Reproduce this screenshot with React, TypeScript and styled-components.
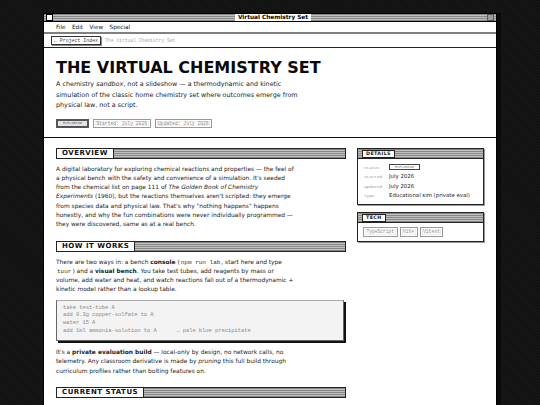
import React from "react";
import styled, { createGlobalStyle, css } from "styled-components";

const GlobalStyle = createGlobalStyle`
  html, body { margin: 0; padding: 0; }
  body {
    background: #141414;
    background-image: repeating-linear-gradient(45deg, #161616 0 1px, #121212 1px 2px);
    font-family: "DejaVu Sans", Verdana, sans-serif;
    color: #1a1a1a;
    overflow: hidden;
  }
`;

const stripes = css`
  background: repeating-linear-gradient(
    to bottom,
    #888888 0 1px,
    #c0c0c0 1px 2px
  );
`;

const Desktop = styled.div`
  height: 405px;
  padding: 13px 0 0 43px;
  box-sizing: border-box;
  overflow: hidden;
`;

const Window = styled.div`
  width: 454px;
  height: 400px;
  box-sizing: border-box;
  border: 1px solid #000;
  border-bottom: none;
  background: #fff;
  box-shadow: 4px 0 0 #0b0b0b;
  overflow: hidden;
`;

const TitleBar = styled.div`
  height: 7px;
  position: relative;
  ${stripes};
  border-bottom: 1px solid #000;
  display: flex;
  align-items: center;
  justify-content: center;
`;

const BoxButton = styled.span<{ $side: "left" | "right" }>`
  position: absolute;
  top: 0;
  ${(p) => (p.$side === "left" ? "left: 2px;" : "right: 2px;")}
  width: 5px;
  height: 5px;
  border: 1px solid ${(p) => (p.$side === "left" ? "#000" : "#555")};
  background: ${(p) => (p.$side === "left" ? "#fff" : "#9a9a9a")};
`;

const WindowTitle = styled.span`
  background: #fff;
  padding: 0 3px;
  font-weight: bold;
  font-size: 5.8px;
  line-height: 7px;
  color: #000;
  transform: translateX(3px);
`;

const MenuBar = styled.nav`
  height: 10px;
  display: flex;
  align-items: center;
  gap: 6.5px;
  padding: 0 12px;
  border-bottom: 2px solid #808080;
  font-size: 5.7px;
  color: #111;
`;

const MenuItem = styled.span``;

const Crumbs = styled.div`
  height: 13px;
  display: flex;
  align-items: center;
  gap: 4px;
  padding: 0 7px;
  border-bottom: 1px solid #222;
  font-family: "Liberation Mono", "DejaVu Sans Mono", monospace;
  font-size: 4.9px;
`;

const CrumbButton = styled.span`
  border: 1px solid #333;
  box-shadow: 1px 1px 0 #888;
  padding: 1px 2px;
  color: #444;
  line-height: 5px;
`;

const CrumbCurrent = styled.span`
  color: #aaa;
  font-size: 4.7px;
`;

const Hero = styled.header`
  padding: 11px 12px 9px;
  border-bottom: 1px solid #111;
`;

const Title = styled.h1`
  margin: 0;
  font-family: "DejaVu Sans", Verdana, sans-serif;
  font-weight: bold;
  font-size: 16px;
  line-height: 18px;
  color: #0a0a0a;
`;

const Lead = styled.p`
  margin: 2px 0 0;
  width: 250px;
  font-size: 6.4px;
  line-height: 10.5px;
  color: #222;
`;

const TagRow = styled.div`
  display: flex;
  gap: 4px;
  margin-top: 8px;
`;

const Tag = styled.span<{ $status?: boolean }>`
  font-family: "Liberation Mono", "DejaVu Sans Mono", monospace;
  font-size: 4.7px;
  line-height: 5px;
  padding: 1px 2.5px;
  ${(p) =>
    p.$status
      ? css`
          border: 2px solid #555;
          background: #e4e4e4;
          color: #666;
          font-size: 3.5px;
          padding: 0 5px;
          line-height: 4px;
        `
      : css`
          border: 1px solid #999;
          box-shadow: inset 0 0 0 1px #fff, inset 0 0 0 1.5px #ddd;
          color: #888;
        `}
`;

const Body = styled.main`
  display: grid;
  grid-template-columns: 290px 127px;
  gap: 11px;
  padding: 10px 12px 0;
  align-items: start;
`;

const Column = styled.div`
  display: flex;
  flex-direction: column;
`;

const Section = styled.section`
  margin-bottom: 11px;
`;

const SectionHead = styled.div`
  height: 11px;
  box-sizing: border-box;
  border: 1px solid #222;
  ${stripes};
  display: flex;
`;

const SectionLabel = styled.span`
  background: #fff;
  border-right: 1px solid #222;
  padding: 0 5px;
  font-weight: bold;
  font-size: 7px;
  letter-spacing: 0.5px;
  line-height: 9px;
  color: #111;
`;

const Para = styled.p`
  margin: 6px 0 0;
  width: 240px;
  font-size: 5.9px;
  line-height: 9.3px;
  color: #222;
`;

const Inline = styled.code`
  font-family: "Liberation Mono", "DejaVu Sans Mono", monospace;
  font-size: 6px;
  padding: 0 1px;
  color: #333;
`;

const CodeBlock = styled.pre`
  margin: 5px 2px 7px 0;
  padding: 4px 6px 5px;
  background: #f3f3f3;
  border: 1px solid #666;
  border-top-color: #aaa;
  box-shadow: 2px 2px 0 #111;
  font-family: "Liberation Mono", "DejaVu Sans Mono", monospace;
  font-size: 5.4px;
  line-height: 7.6px;
  color: #888;
  & + p { margin-top: 0; }
`;

const Panel = styled.aside`
  border: 1px solid #222;
  box-shadow: 1px 1px 0 #999;
  margin-bottom: 7px;
`;

const PanelHead = styled.div`
  height: 10px;
  box-sizing: border-box;
  border-bottom: 1px solid #222;
  ${stripes};
  display: flex;
  padding: 1px 0 0 4px;
`;

const PanelLabel = styled.span`
  background: #fff;
  border: 1px solid #222;
  padding: 0 3px;
  font-weight: bold;
  font-size: 4.8px;
  letter-spacing: 0.4px;
  line-height: 6px;
`;

const DetailGrid = styled.dl`
  margin: 0;
  padding: 4px 4px 3px 6px;
  display: grid;
  grid-template-columns: 25px 1fr;
  align-items: center;
`;

const DetailKey = styled.dt`
  font-family: "Liberation Mono", "DejaVu Sans Mono", monospace;
  font-size: 4.3px;
  line-height: 9.6px;
  color: #999;
`;

const DetailValue = styled.dd`
  margin: 0;
  font-size: 5.4px;
  line-height: 9.6px;
  color: #222;
`;

const StatusTag = styled.span`
  display: inline-block;
  border: 1.5px solid #444;
  padding: 0 5px;
  font-family: "Liberation Mono", monospace;
  font-size: 3.5px;
  line-height: 4px;
  color: #777;
  vertical-align: middle;
`;

const TechRow = styled.div`
  display: flex;
  gap: 2px;
  padding: 4px 5px;
`;

const TechTag = styled.span`
  border: 1px solid #999;
  box-shadow: inset 0 0 0 1px #fff, inset 0 0 0 1.5px #ddd;
  padding: 1.5px 2.5px;
  font-family: "Liberation Mono", monospace;
  font-size: 4.6px;
  line-height: 5px;
  color: #888;
`;

export default function App() {
  return (
    <>
      <GlobalStyle />
      <Desktop>
        <Window>
          <TitleBar>
            <BoxButton $side="left" />
            <WindowTitle>Virtual Chemistry Set</WindowTitle>
            <BoxButton $side="right" />
          </TitleBar>
          <MenuBar>
            <MenuItem>File</MenuItem>
            <MenuItem>Edit</MenuItem>
            <MenuItem>View</MenuItem>
            <MenuItem>Special</MenuItem>
          </MenuBar>
          <Crumbs>
            <CrumbButton>← Project Index</CrumbButton>
            <CrumbCurrent>The Virtual Chemistry Set</CrumbCurrent>
          </Crumbs>
          <Hero>
            <Title>THE VIRTUAL CHEMISTRY SET</Title>
            <Lead>
              A chemistry <em>sandbox</em>, not a slideshow — a thermodynamic and
              kinetic simulation of the classic home chemistry set where outcomes
              emerge from physical law, not a script.
            </Lead>
            <TagRow>
              <Tag $status>EXPLORING</Tag>
              <Tag>Started: July 2026</Tag>
              <Tag>Updated: July 2026</Tag>
            </TagRow>
          </Hero>
          <Body>
            <Column>
              <Section>
                <SectionHead>
                  <SectionLabel>OVERVIEW</SectionLabel>
                </SectionHead>
                <Para>
                  A digital laboratory for exploring chemical reactions and
                  properties — the feel of a physical bench with the safety and
                  convenience of a simulation. It's seeded from the chemical list
                  on page 111 of <em>The Golden Book of Chemistry Experiments</em>{" "}
                  (1960), but the reactions themselves aren't scripted: they
                  emerge from species data and physical law. That's why "nothing
                  happens" happens honestly, and why the fun combinations were
                  never individually programmed — they were discovered, same as
                  at a real bench.
                </Para>
              </Section>
              <Section>
                <SectionHead>
                  <SectionLabel>HOW IT WORKS</SectionLabel>
                </SectionHead>
                <Para>
                  There are two ways in: a bench <strong>console</strong> (
                  <Inline>npm run lab</Inline>, start here and type{" "}
                  <Inline>tour</Inline>) and a <strong>visual bench</strong>. You
                  take test tubes, add reagents by mass or volume, add water and
                  heat, and watch reactions fall out of a thermodynamic + kinetic
                  model rather than a lookup table.
                </Para>
                <CodeBlock>{`take test-tube A
add 0.3g copper-sulfate to A
water 15 A
add 1ml ammonia-solution to A      → pale blue precipitate`}</CodeBlock>
                <Para>
                  It's a <strong>private evaluation build</strong> — local-only by
                  design, no network calls, no telemetry. Any classroom derivative
                  is made by <em>pruning</em> this full build through curriculum
                  profiles rather than bolting features on.
                </Para>
              </Section>
              <Section>
                <SectionHead>
                  <SectionLabel>CURRENT STATUS</SectionLabel>
                </SectionHead>
              </Section>
            </Column>
            <Column>
              <Panel>
                <PanelHead>
                  <PanelLabel>DETAILS</PanelLabel>
                </PanelHead>
                <DetailGrid>
                  <DetailKey>Status</DetailKey>
                  <DetailValue>
                    <StatusTag>EXPLORING</StatusTag>
                  </DetailValue>
                  <DetailKey>Started</DetailKey>
                  <DetailValue>July 2026</DetailValue>
                  <DetailKey>Updated</DetailKey>
                  <DetailValue>July 2026</DetailValue>
                  <DetailKey>Type</DetailKey>
                  <DetailValue>Educational sim (private eval)</DetailValue>
                </DetailGrid>
              </Panel>
              <Panel>
                <PanelHead>
                  <PanelLabel>TECH</PanelLabel>
                </PanelHead>
                <TechRow>
                  <TechTag>TypeScript</TechTag>
                  <TechTag>Vite</TechTag>
                  <TechTag>Vitest</TechTag>
                </TechRow>
              </Panel>
            </Column>
          </Body>
        </Window>
      </Desktop>
    </>
  );
}
